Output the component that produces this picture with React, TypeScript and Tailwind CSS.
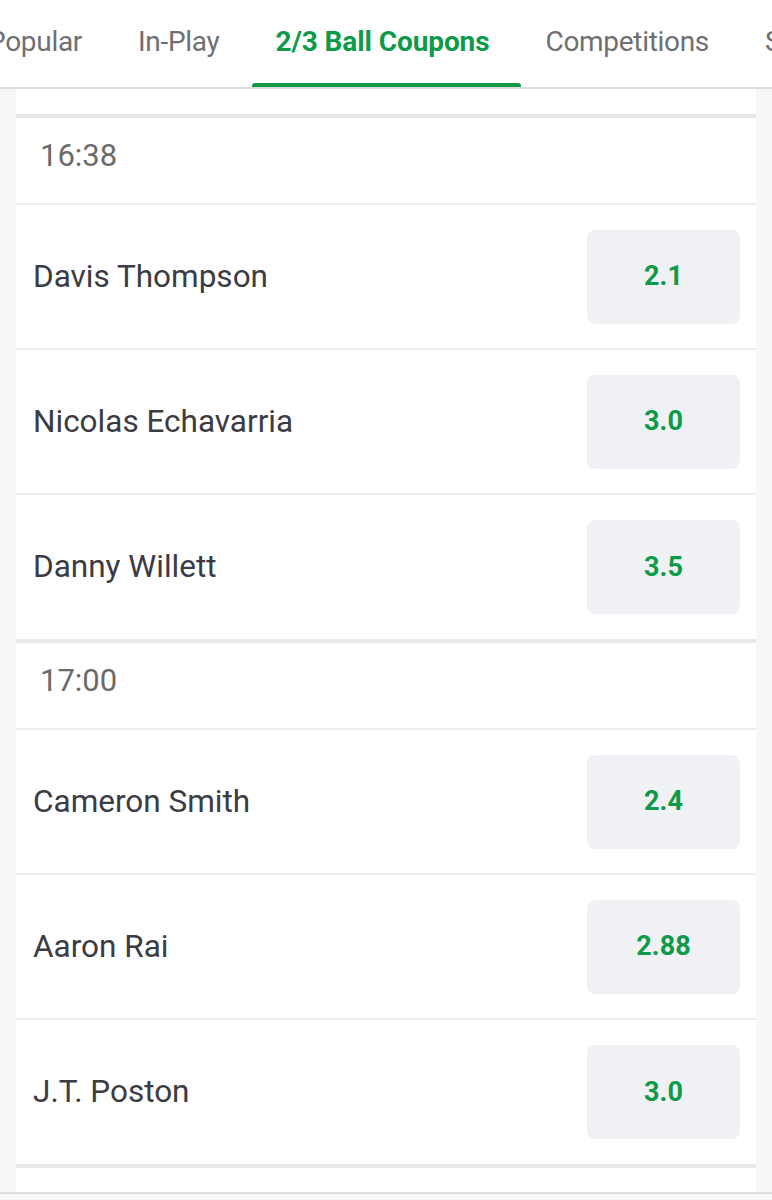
import React from "react";

const groups = [
  {
    time: "16:38",
    players: [
      { name: "Davis Thompson", odds: "2.1" },
      { name: "Nicolas Echavarria", odds: "3.0" },
      { name: "Danny Willett", odds: "3.5" },
    ],
  },
  {
    time: "17:00",
    players: [
      { name: "Cameron Smith", odds: "2.4" },
      { name: "Aaron Rai", odds: "2.88" },
      { name: "J.T. Poston", odds: "3.0" },
    ],
  },
];

const tabs = ["Popular", "In-Play", "2/3 Ball Coupons", "Competitions", "Schedule"];

export default function App() {
  return (
    <div
      className="w-[772px] h-[1200px] overflow-hidden bg-[#f7f7f9]"
      style={{ fontFamily: "Roboto, 'Noto Sans', sans-serif" }}
    >
      <div className="h-[89px] bg-white border-b-2 border-[#dcdcdc] overflow-hidden">
        <div className="flex h-full ml-[-40px] whitespace-nowrap">
          {tabs.map((t, i) => {
            const active = i === 2;
            return (
              <div key={t} className="relative h-full px-[28px] flex items-center pb-[3px]">
                <span
                  className={
                    active
                      ? "text-[28px] font-bold tracking-[-0.1px] text-[#0d9a49]"
                      : "text-[28px] tracking-[-0.3px] text-[#6f6f73]"
                  }
                >
                  {t}
                </span>
                {active && (
                  <div className="absolute left-[4px] right-[-4px] bottom-[-2px] h-[6px] rounded-full bg-[#11994a]" />
                )}
              </div>
            );
          })}
        </div>
      </div>

      <div className="mx-[16px] bg-white">
        <div className="h-[25px]" />
        {groups.map((g) => (
          <div key={g.time}>
            <div className="h-[4px] bg-[#e7e7ec]" />
            <div className="h-[87px] flex items-center pl-[24px] pb-[8px] border-b-2 border-[#ececf0]">
              <span className="text-[31px] text-[#6b6b6e]">{g.time}</span>
            </div>
            {g.players.map((p, idx) => (
              <div
                key={p.name}
                className={
                  idx < g.players.length - 1
                    ? "h-[145px] flex items-center justify-between pl-[17px] pr-[16px] border-b-2 border-[#ececf0]"
                    : "h-[144px] flex items-center justify-between pl-[17px] pr-[16px]"
                }
              >
                <span className="text-[31.5px] text-[#3b3b44]">{p.name}</span>
                <div className="w-[153px] h-[94px] rounded-[8px] bg-[#f0f1f4] flex items-center justify-center">
                  <span className="text-[27px] font-bold text-[#0f9a48]">{p.odds}</span>
                </div>
              </div>
            ))}
          </div>
        ))}
        <div className="h-[4px] bg-[#e7e7ec]" />
        <div className="h-[24px]" />
      </div>
      <div className="h-[2px] bg-[#e0e0e0]" />
    </div>
  );
}
